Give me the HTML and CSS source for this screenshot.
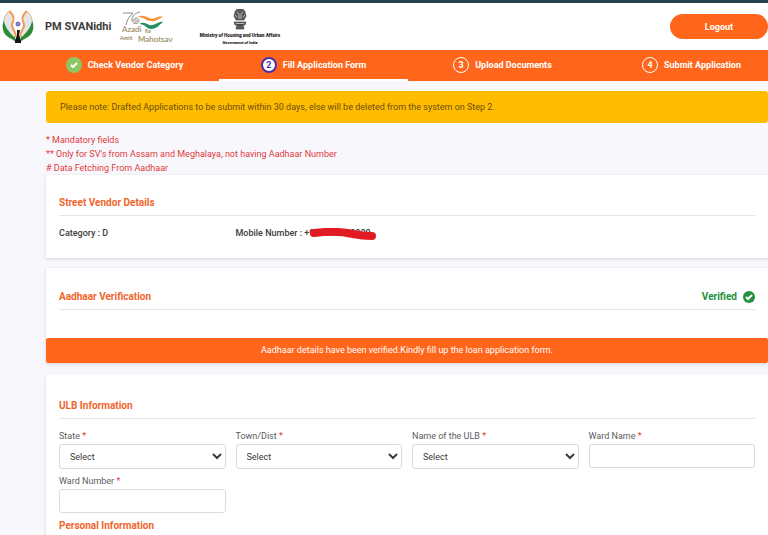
FILE: index.html
```html
<!DOCTYPE html>
<html lang="en">
<head>
    <meta charset="UTF-8">
    <meta name="viewport" content="width=device-width, initial-scale=1.0">
    <title>PM SVANidhi</title>
    <link rel="stylesheet" href="styles.css">
</head>
<body>
    <header class="header">
        <svg class="logo" viewBox="0 0 32 34" aria-hidden="true">
            <path d="M3 8C-1 15 0 23 6 27c3 2 6 3 8 5 0-5-3-8-6-12z" fill="#2f8a35"/>
            <path d="M29 8c4 7 3 15-3 19-3 2-6 3-8 5 0-5 3-8 6-12z" fill="#2f8a35"/>
            <path d="M7 1C4 4 2 8 2 11c1 6 5 11 10 16 1-5-3-8-2-13 1-4 1-8-3-13z" fill="#e3e6e6"/>
            <path d="M25 1c3 3 5 7 5 10-1 6-5 11-10 16-1-5 3-8 2-13-1-4-1-8 3-13z" fill="#e3e6e6"/>
            <path d="M7 1c6 5 5 9 3 13-1 4 4 7 4 13M25 1c-6 5-5 9-3 13 1 4-4 7-4 13" fill="none" stroke="#f39a52" stroke-width="2"/>
            <path d="M6 2C4 5 2 7 2 10M26 2c2 3 4 5 4 8" fill="none" stroke="#f3b07c" stroke-width="1"/>
            <circle cx="16" cy="14" r="2" fill="#8f8bd0" stroke="#5f5cb0" stroke-width="1"/>
            <path d="M15 20h3l-1 5 2 6v2h-6v-2l2-6z" fill="#151515"/>
        </svg>
        <h1 class="brand">PM SVANidhi</h1>
        <svg class="azadi" viewBox="0 0 54 34" aria-label="Azadi Ka Amrit Mahotsav">
            <path d="M3 2h10C9 6 7 9 6 14M20 1c-5 1-8 4-8 8s6 5 7 1c0-4-5-4-6 0" fill="none" stroke="#8d8b84" stroke-width="1"/>
            <circle cx="16" cy="10" r="2" fill="#c4c4bd"/>
            <path d="M18 6c8-4 11 4 17 1 3-1 5-2 8-1-5 2-7 5-12 4-5 0-7-4-13-4z" fill="#f39335"/>
            <path d="M19 13c7-4 9 3 14 1 4-1 6-4 10-3-4 3-6 7-12 7-4 0-6-5-12-5z" fill="#239064"/>
            <g font-family="Lato, sans-serif" fill="#a39570" stroke="#a39570" stroke-width=".2">
                <text x="2" y="21" font-size="8">Azadi</text>
                <text x="25" y="22" font-size="5">Ka</text>
                <text x="0" y="29" font-size="5">Amrit</text>
                <text x="18" y="31" font-size="8">Mahotsav</text>
            </g>
        </svg>
        <svg class="ministry" viewBox="0 0 84 36" aria-label="Ministry of Housing and Urban Affairs, Government of India">
            <g fill="#5d5d5d" stroke="#333">
                <path d="M37 3c1-3 3-3 5-3s4 0 5 3l1 4-2 4h-8l-2-4z" stroke-width=".6"/>
                <path d="M36 13h12l-1 3H37zM39 16h6l1 4h-8z" stroke-width=".6"/>
            </g>
            <path d="M39 3l2 2v5M45 3l-2 2v5M37 6l2 2M47 6l-2 2M38 14.500h8" fill="none" stroke="#ddd" stroke-width=".7"/>
            <g font-family="Roboto, sans-serif" font-weight="900" fill="#222" text-anchor="middle">
                <text x="42" y="28" font-size="4.700">Ministry of Housing and Urban Affairs</text>
                <text x="42" y="35" font-size="3.800">Government of India</text>
            </g>
        </svg>
        <button type="button" class="btn-logout">Logout</button>
    </header>

    <nav class="steps">
        <a class="step" href="#">
            <span class="step-icon done">
                <svg viewBox="0 0 16 16" aria-hidden="true"><path d="M5 8l2 2 4-4" fill="none" stroke="#fff" stroke-width="2"/></svg>
            </span>
            Check Vendor Category
        </a>
        <a class="step active" href="#"><span class="step-icon">2</span>Fill Application Form</a>
        <a class="step" href="#"><span class="step-icon">3</span>Upload Documents</a>
        <a class="step" href="#"><span class="step-icon">4</span>Submit Application</a>
    </nav>

    <main class="content">
        <div class="alert">Please note: Drafted Applications to be submit within 30 days, else will be deleted from the system on Step 2.</div>

        <div class="notes">
            <p>* Mandatory fields</p>
            <p>** Only for SV's from Assam and Meghalaya, not having Aadhaar Number</p>
            <p># Data Fetching From Aadhaar</p>
        </div>

        <section class="card vendor">
            <h2 class="card-title">Street Vendor Details</h2>
            <div class="row details">
                <div>Category : D</div>
                <div class="mobile">Mobile Number : <span class="number">+900000000000
                    <svg class="scribble" viewBox="0 0 66 12" aria-hidden="true">
                        <path d="M4 5C20 3 34 4 43 6s12 2 19 2" fill="none" stroke="#e21b22" stroke-width="8" stroke-linecap="round"/>
                    </svg></span>
                </div>
            </div>
        </section>

        <section class="card aadhaar">
            <h2 class="card-title">Aadhaar Verification
                <span class="verified">Verified
                    <svg viewBox="0 0 12 12" aria-hidden="true">
                        <circle cx="6" cy="6" r="6" fill="#22903f"/>
                        <path d="M3 6l2 2 4-4" fill="none" stroke="#fff" stroke-width="2"/>
                    </svg>
                </span>
            </h2>
            <div class="banner">Aadhaar details have been verified.Kindly fill up the loan application form.</div>
        </section>

        <section class="card ulb">
            <h2 class="card-title">ULB Information</h2>
            <form class="row">
                <div class="field">
                    <label for="state">State <span class="req">*</span></label>
                    <select id="state"><option>Select</option></select>
                </div>
                <div class="field">
                    <label for="town">Town/Dist <span class="req">*</span></label>
                    <select id="town"><option>Select</option></select>
                </div>
                <div class="field">
                    <label for="ulb">Name of the ULB <span class="req">*</span></label>
                    <select id="ulb"><option>Select</option></select>
                </div>
                <div class="field">
                    <label for="wardName">Ward Name <span class="req">*</span></label>
                    <input type="text" id="wardName">
                </div>
                <div class="field">
                    <label for="wardNumber">Ward Number <span class="req">*</span></label>
                    <input type="text" id="wardNumber">
                </div>
            </form>
            <h2 class="card-title personal">Personal Information</h2>
        </section>
    </main>
</body>
</html>
```
FILE: styles.css
```css
* {
    margin: 0;
    padding: 0;
    box-sizing: border-box;
}

html {
    overflow: hidden;
}

body {
    font-family: Roboto, sans-serif;
    font-size: 9px;
    line-height: 14px;
    color: #3c3c3c;
    background: #f8f8fc;
    border-top: 3px solid #26424c;
}

.header {
    display: flex;
    align-items: center;
    height: 47px;
    padding-left: 2px;
    background: #fff;
}

.logo {
    width: 32px;
    height: 34px;
}

.brand {
    margin-left: 11px;
    font-size: 11px;
    font-weight: 700;
}

.azadi {
    width: 54px;
    height: 34px;
    margin-top: 3px;
    margin-left: 9px;
}

.ministry {
    width: 84px;
    height: 36px;
    margin-left: 24px;
}

.btn-logout {
    width: 98px;
    height: 25px;
    margin-left: auto;
    border: none;
    border-radius: 13px;
    background: #ff661b;
    color: #fff;
    font-family: inherit;
    font-size: 9px;
    font-weight: 700;
    cursor: pointer;
}

.steps {
    display: flex;
    height: 31px;
    padding-left: 30px;
    background: #ff661b;
}

.step {
    display: flex;
    flex: 0 0 189px;
    align-items: center;
    justify-content: center;
    gap: 6px;
    border-bottom: 2px solid transparent;
    color: #fff;
    font-weight: 700;
    text-decoration: none;
}

.step.active {
    border-bottom-color: #fff;
}

.step-icon {
    display: flex;
    align-items: center;
    justify-content: center;
    width: 16px;
    height: 16px;
    border: 1px solid #fff;
    border-radius: 50%;
    line-height: 12px;
}

.step-icon.done {
    border: none;
    background: #8cc665;
}

.active .step-icon {
    border: 2px solid #4a31a5;
    background: #fff;
    color: #4a31a5;
}

.content {
    padding: 10px 0 0 46px;
}

.alert {
    padding: 9px 14px;
    border-radius: 3px;
    background: #ffbc00;
    color: #6b4f08;
}

.notes {
    margin-top: 10px;
    color: #e0393e;
}

.card {
    margin-bottom: 10px;
    padding: 21px 13px 0;
    background: #fff;
    box-shadow: 0 1px 3px rgba(0, 0, 0, 0.15);
}

.card-title {
    display: flex;
    justify-content: space-between;
    padding-bottom: 5px;
    border-bottom: 1px solid #e6e6e9;
    color: #f0642a;
    font-size: 10px;
    font-weight: 700;
}

.row {
    display: grid;
    grid-template-columns: repeat(4, 1fr);
    column-gap: 10px;
}

.vendor {
    padding-bottom: 18px;
}

.details {
    padding-top: 10px;
    font-weight: 500;
}

.mobile {
    white-space: nowrap;
}

.number {
    position: relative;
}

/* hides the phone number */
.scribble {
    position: absolute;
    top: 0;
    left: 6px;
    width: 66px;
    height: 12px;
}

.aadhaar {
    margin-bottom: 11px;
    padding-top: 22px;
}

.verified {
    display: flex;
    align-items: center;
    gap: 6px;
    color: #22903f;
}

.verified svg {
    width: 12px;
    height: 12px;
}

.banner {
    margin: 28px -13px 0;
    padding: 5px;
    border-radius: 2px;
    background: #ff661b;
    color: #fff;
    line-height: 15px;
    text-align: center;
}

.ulb {
    padding-top: 25px;
}

.field {
    display: flex;
    flex-direction: column;
    padding-top: 10px;
}

.field:nth-child(n+5) {
    padding-top: 5px;
}

.field label {
    margin-bottom: 1px;
    color: #5c5c5c;
}

.req {
    color: #e0393e;
}

.field select,
.field input {
    width: 100%;
    height: 25px;
    padding: 0 6px;
    border: 1px solid #dcdce0;
    border-radius: 3px;
    background: #fff;
    color: #3c3c3c;
    font-family: inherit;
    font-size: 9px;
}

.field input {
    height: 24px;
}

.field select {
    padding-right: 0;
}

.personal {
    margin-top: 6px;
}
```
